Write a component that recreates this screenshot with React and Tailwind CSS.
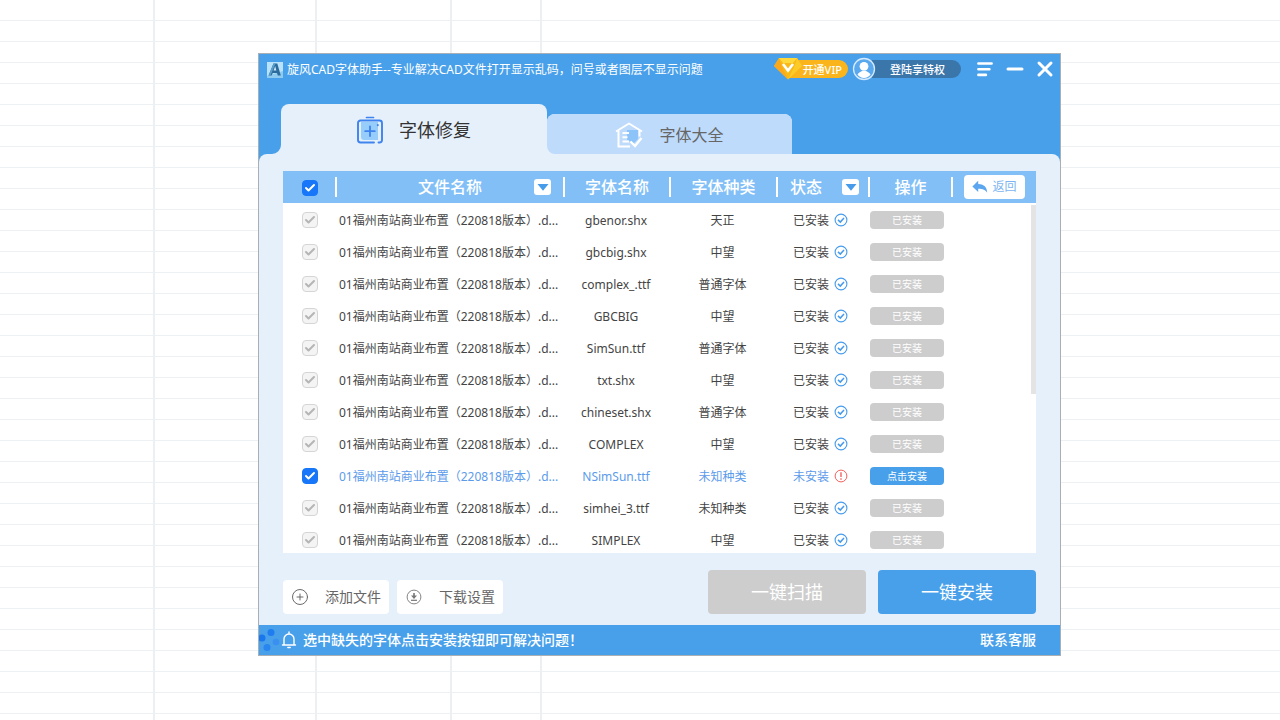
import React, { useState } from 'react'
import { Check, CirclePlus, Minus, X } from 'lucide-react'

const FILE_NAME = '01福州南站商业布置（220818版本）.d...'

const fonts = [
  { name: 'gbenor.shx', type: '天正', installed: true },
  { name: 'gbcbig.shx', type: '中望', installed: true },
  { name: 'complex_.ttf', type: '普通字体', installed: true },
  { name: 'GBCBIG', type: '中望', installed: true },
  { name: 'SimSun.ttf', type: '普通字体', installed: true },
  { name: 'txt.shx', type: '中望', installed: true },
  { name: 'chineset.shx', type: '普通字体', installed: true },
  { name: 'COMPLEX', type: '中望', installed: true },
  { name: 'NSimSun.ttf', type: '未知种类', installed: false },
  { name: 'simhei_3.ttf', type: '未知种类', installed: true },
  { name: 'SIMPLEX', type: '中望', installed: true }
]

const AppLogo = () => (
  <svg viewBox="0 0 16 16" className="h-4 w-4 shrink-0">
    <rect width="16" height="16" fill="#b9e3fa" />
    <path d="M0 14 16 9v7H0z" fill="#8fcbee" />
    <path d="M1.5 13.5 6.5 1.500h3.800L13.800 13.500h-3l-.8-2.500H5.800l-1.200 2.500z" fill="#2c6c9d" />
    <path d="M6.600 8.500 8.200 4l1.100 4.500z" fill="#cfeafa" />
    <path d="M6.500 1.500h2L3.500 13.500h-2z" fill="#5a9fce" />
  </svg>
)

const VipGem = () => (
  <svg viewBox="0 0 28 24" className="h-6 w-7">
    <path d="M5 1h18l5 8L14 22.500 0 9z" fill="#f9b916" />
    <path d="M5 1h18l-4 5H9z" fill="#ffd93c" />
    <path d="M5 1 0 9l14 13.500L7 8z" fill="#fba81c" />
    <path d="M23 1l5 8-14 13.500 7-14.500z" fill="#fdcb28" />
    <path d="M9 7l5 6.500L19 7" fill="none" stroke="#fff" strokeWidth="2.600" />
  </svg>
)

const Avatar = () => (
  <svg viewBox="0 0 24 24" className="h-6 w-6">
    <circle cx="12" cy="12" r="10.500" fill="#5aa9ee" stroke="#d6ebff" strokeWidth="1.300" />
    <circle cx="12" cy="9.300" r="4.400" fill="#fff" />
    <path d="M5.500 17.500c1-2.200 3.500-2.700 4.500-3.500h4c1 .8 3.500 1.300 4.500 3.500A8.600 8.600 0 0 1 12 21a8.600 8.600 0 0 1-6.500-3.500z" fill="#fff" />
  </svg>
)

const MenuLines = () => (
  <svg viewBox="0 0 16 16" className="h-4 w-4" fill="none" stroke="#fff" strokeWidth="2.600" strokeLinecap="round">
    <path d="M1.400 2.500h13.200M1.400 8.200h11M1.400 13.900h7.500" />
  </svg>
)

const RepairIcon = () => (
  <svg viewBox="0 0 26 28" className="h-7 w-[26px]" fill="none" stroke="#3e83ee" strokeLinecap="round">
    <path d="M4 6h17v18H7a3 3 0 0 1-3-3z" fill="#97cdfb" stroke="none" />
    <path d="M9.500 1.500h7" strokeWidth="1.700" />
    <path d="M17 26.500H3.500A2.500 2.500 0 0 1 1 24v-17A2.500 2.500 0 0 1 3.500 4.500h19A2.500 2.500 0 0 1 25 7v17a2.500 2.500 0 0 1-2.500 2.500H21.500" strokeWidth="1.900" />
    <path d="M13 10.500v9.500M8.200 15.200h9.600" strokeWidth="1.800" />
    <path d="M20.800 9v.2" strokeWidth="1.900" />
  </svg>
)

const LibraryIcon = () => (
  <svg viewBox="0 0 28 28" className="h-7 w-7" fill="none" stroke="#fff" strokeWidth="2">
    <path d="M12 9h11v9l-4 4-7-3z" fill="#8cc3f9" stroke="none" />
    <path d="M1 10.500 14 2.500l13 8" strokeLinejoin="round" />
    <path d="M3.500 9.500V25.500H15" />
    <path d="M24.500 9.500v6" />
    <path d="M7.500 12h6.500M7.500 16.300h5M7.500 20.600h6.500" strokeWidth="2" />
    <path d="m15.500 20.500 4.500 4.500 6.500-8" strokeWidth="2.400" />
  </svg>
)

const ReplyIcon = () => (
  <svg viewBox="0 0 16 14" className="h-3.5 w-4" fill="#5ba6ee">
    <path d="M6.200.8v3.100c5 .1 8.800 2.600 9 8.800C13.500 9.900 11 8.700 6.200 8.700V12L.4 6.400z" />
  </svg>
)

const InstalledIcon = () => (
  <svg viewBox="0 0 14 14" className="h-3.5 w-3.5" fill="none" stroke="#469bea">
    <circle cx="7" cy="7" r="5.900" strokeWidth="1.100" />
    <path d="m4 6.900 2.300 2.200L10 4.900" strokeWidth="1.500" />
  </svg>
)

const MissingIcon = () => (
  <svg viewBox="0 0 14 14" className="h-3.5 w-3.5" fill="none" stroke="#f2625f">
    <circle cx="7" cy="7" r="5.900" strokeWidth="1" />
    <path d="M7 3.200v4.800M7 9.300v1.500" strokeWidth="1.400" />
  </svg>
)

const DownloadIcon = () => (
  <svg viewBox="0 0 18 18" className="h-[18px] w-[18px]" fill="none" stroke="#777">
    <circle cx="9" cy="9" r="6.900" strokeWidth=".9" />
    <path d="M6 12.300h6" strokeWidth="1.200" />
    <path d="M9 5v3" strokeWidth="1.600" />
    <path d="M6 7.600h6L9 11z" fill="#777" stroke="none" />
  </svg>
)

const BellIcon = () => (
  <svg viewBox="0 0 16 18" className="h-[18px] w-4" fill="none" stroke="#fff" strokeWidth="1.400" strokeLinecap="round">
    <path d="M8 1v1.500M1.500 14h13M3 13.800V8a5 5 0 0 1 10 0v5.800M6.800 16.500h2.400" />
  </svg>
)

const Dots = () => (
  <svg viewBox="0 0 22 24" className="h-6 w-[22px]">
    <circle cx="3" cy="10" r="3.500" fill="#1877ee" />
    <circle cx="12" cy="4.500" r="3.500" fill="#1f7df0" />
    <circle cx="8" cy="19.500" r="3.500" fill="#2985ef" />
    <circle cx="17" cy="14" r="3.300" fill="#3990f0" />
  </svg>
)

const Checkbox = ({ label, ...props }) => (
  <label className="relative block h-4 w-4">
    <input
      type="checkbox"
      aria-label={label}
      className="peer block h-4 w-4 appearance-none rounded border border-[#d5d5d5] bg-[#f4f4f4] enabled:checked:border-[#1877f8] enabled:checked:bg-[#1877f8]"
      {...props}
    />
    <Check
      className="pointer-events-none absolute left-0.5 top-0.5 hidden h-3 w-3 text-white peer-checked:block peer-disabled:text-[#b5b5b5]"
      strokeWidth={4}
    />
  </label>
)

const Separator = () => <span className="h-5 w-0.5 shrink-0 bg-white" />

const FilterButton = ({ label }) => (
  <button aria-label={label} className="flex h-4 w-[17px] items-center justify-center rounded-[3px] bg-white">
    <svg viewBox="0 0 12 7" className="h-[7px] w-3" fill="#469bea">
      <path d="M.5 0h11L6 6.800z" />
    </svg>
  </button>
)

const FontRow = ({ font }) => (
  <tr className={`h-8 ${font.installed ? 'text-[#444]' : 'text-[#5c9bea]'}`}>
    <td className="pl-[19px] pt-0.5">
      <Checkbox label={font.name} defaultChecked disabled={font.installed} />
    </td>
    <td className="whitespace-nowrap pl-1 pt-1">{FILE_NAME}</td>
    <td className="pt-1 text-center">{font.name}</td>
    <td className="pt-1 text-center">{font.type}</td>
    <td className="pt-0.5">
      <div className="flex items-center gap-[5px] pl-[17px]">
        <span className="pt-0.5">{font.installed ? '已安装' : '未安装'}</span>
        {font.installed ? <InstalledIcon /> : <MissingIcon />}
      </div>
    </td>
    <td className="pl-0.5 pt-0.5">
      <button
        disabled={font.installed}
        className="block h-[18px] w-[74px] rounded bg-[#489fea] text-[10px] leading-[18px] text-white disabled:bg-[#cdcdcd]"
      >
        {font.installed ? '已安装' : '点击安装'}
      </button>
    </td>
    <td></td>
  </tr>
)

const App = () => {
  const [tab, setTab] = useState('repair')

  return (
    <div className="relative min-h-screen bg-white bg-[repeating-linear-gradient(to_bottom,transparent_0_20px,#edf1f4_20px_21px)] font-['Noto_Sans','Noto_Sans_CJK_SC',sans-serif]">
      {/* Sheet columns behind the window */}
      <div className="absolute inset-0 flex">
        <div className="w-[155px] border-r-2 border-[#edf0f3]"></div>
        <div className="w-[162px] border-r-2 border-[#edf0f3]"></div>
        <div className="w-[135px] border-r-2 border-[#edf0f3]"></div>
        <div className="w-[90px] border-r-2 border-[#edf0f3]"></div>
      </div>

      <div className="relative pb-16 pl-[258px] pr-[219px] pt-[53px]">
        <div className="border border-[#a9b0b5] bg-[#489fea]">
          {/* Title bar */}
          <header className="flex h-8 items-center justify-between pl-2 pr-[7px] text-white">
            <div className="flex items-center gap-1">
              <AppLogo />
              <h1 className="whitespace-nowrap text-xs">
                旋风CAD字体助手--专业解决CAD文件打开显示乱码，问号或者图层不显示问题
              </h1>
            </div>
            <div className="flex items-center pb-0.5">
              <button className="flex items-center">
                <span className="relative">
                  <VipGem />
                </span>
                <span className="-ml-4 flex h-[18px] items-center rounded-r-full bg-[#fbb51c] pl-[17px] pr-1.5 text-[11px] font-medium leading-none">
                  开通VIP
                </span>
              </button>
              <button className="ml-1 flex items-center">
                <span className="relative">
                  <Avatar />
                </span>
                <span className="-ml-1 flex h-[18px] items-center rounded-r-full bg-[#3b76aa] pl-[18px] pr-4 text-[11px] font-medium leading-none">
                  登陆享特权
                </span>
              </button>
              <button aria-label="菜单" className="ml-4">
                <MenuLines />
              </button>
              <button aria-label="最小化" className="ml-2.5">
                <Minus className="h-6 w-6" strokeWidth={3} />
              </button>
              <button aria-label="关闭" className="ml-1.5">
                <X className="-mr-1 h-6 w-6" strokeWidth={3} />
              </button>
            </div>
          </header>

          {/* Tabs */}
          <nav className="flex items-end pl-[22px] pt-[18px]">
            <button
              onClick={() => setTab('repair')}
              aria-pressed={tab === 'repair'}
              className="relative flex h-[50px] w-[266px] items-center justify-center gap-4 rounded-t-lg bg-[#e6f0fb] pt-0.5 text-lg text-[#333]"
            >
              <svg viewBox="0 0 9 9" className="absolute -left-[9px] bottom-0 h-[9px] w-[9px]" fill="#e6f0fb">
                <path d="M9 0v9H0a9 9 0 0 0 9-9z" />
              </svg>
              <RepairIcon />
              字体修复
            </button>
            <div className="rounded-t-lg bg-[#e6f0fb]">
              <button
                onClick={() => setTab('library')}
                aria-pressed={tab === 'library'}
                className="flex h-10 w-[245px] items-center justify-center gap-4 rounded-t-lg rounded-bl-lg bg-[#bedbfb] pt-0.5 text-base text-[#666]"
              >
                <LibraryIcon />
                字体大全
              </button>
            </div>
          </nav>

          <main className="rounded-t-lg bg-[#e6f0fb] px-6 pb-[11px] pt-[17px]">
            {/* Font list */}
            <div className="relative h-[382px] overflow-hidden bg-white">
              <table className="w-full table-fixed text-xs">
                <thead className="bg-[#82bff7] text-base text-white">
                  <tr className="h-8">
                    <th className="w-[52px] pl-[19px] pt-0.5">
                      <Checkbox label="全选" defaultChecked />
                    </th>
                    <th className="font-medium">
                      <div className="relative flex items-center">
                        <Separator />
                        <span className="flex-1 text-center">文件名称</span>
                        <span className="absolute right-3">
                          <FilterButton label="筛选文件名称" />
                        </span>
                      </div>
                    </th>
                    <th className="w-[106px] font-medium">
                      <div className="flex items-center">
                        <Separator />
                        <span className="flex-1 text-center">字体名称</span>
                      </div>
                    </th>
                    <th className="w-[107px] font-medium">
                      <div className="flex items-center">
                        <Separator />
                        <span className="flex-1 text-center">字体种类</span>
                      </div>
                    </th>
                    <th className="w-[92px] font-medium">
                      <div className="flex items-center justify-between pr-[9px]">
                        <Separator />
                        <span className="ml-3 mr-auto">状态</span>
                        <FilterButton label="筛选状态" />
                      </div>
                    </th>
                    <th className="w-[83px] font-medium">
                      <div className="flex items-center">
                        <Separator />
                        <span className="flex-1 text-center">操作</span>
                      </div>
                    </th>
                    <th className="w-[85px] font-normal">
                      <div className="flex items-center">
                        <Separator />
                        <button className="ml-[11px] flex h-6 w-[61px] items-center justify-center gap-1 rounded bg-white text-xs text-[#7db5f0]">
                          <ReplyIcon />
                          返回
                        </button>
                      </div>
                    </th>
                  </tr>
                </thead>
                <tbody>
                  {fonts.map((font) => (
                    <FontRow key={font.name} font={font} />
                  ))}
                </tbody>
              </table>
              <div className="absolute right-0 top-[34px] h-[189px] w-[5px] bg-[#e4e4e4]"></div>
            </div>

            {/* Actions */}
            <div className="mt-[17px] flex items-end">
              <button className="flex h-[34px] w-[106px] items-center justify-between rounded bg-white px-2 text-sm text-[#666]">
                <CirclePlus className="h-[18px] w-[18px]" strokeWidth={1.3} />
                添加文件
              </button>
              <button className="ml-2 flex h-[34px] w-[106px] items-center justify-between rounded bg-white px-2 text-sm text-[#666]">
                <DownloadIcon />
                下载设置
              </button>
              <button className="ml-auto h-11 w-[158px] rounded bg-[#cdcdcd] text-lg text-white">一键扫描</button>
              <button className="ml-3 h-11 w-[158px] rounded bg-[#489fea] text-lg text-white">一键安装</button>
            </div>
          </main>

          {/* Status bar */}
          <footer className="flex h-[30px] items-center pr-6 text-sm font-medium text-white">
            <Dots />
            <BellIcon />
            <p className="ml-1.5">选中缺失的字体点击安装按钮即可解决问题！</p>
            <a href="#" className="ml-auto">
              联系客服
            </a>
          </footer>
        </div>
      </div>
    </div>
  )
}

export default App
